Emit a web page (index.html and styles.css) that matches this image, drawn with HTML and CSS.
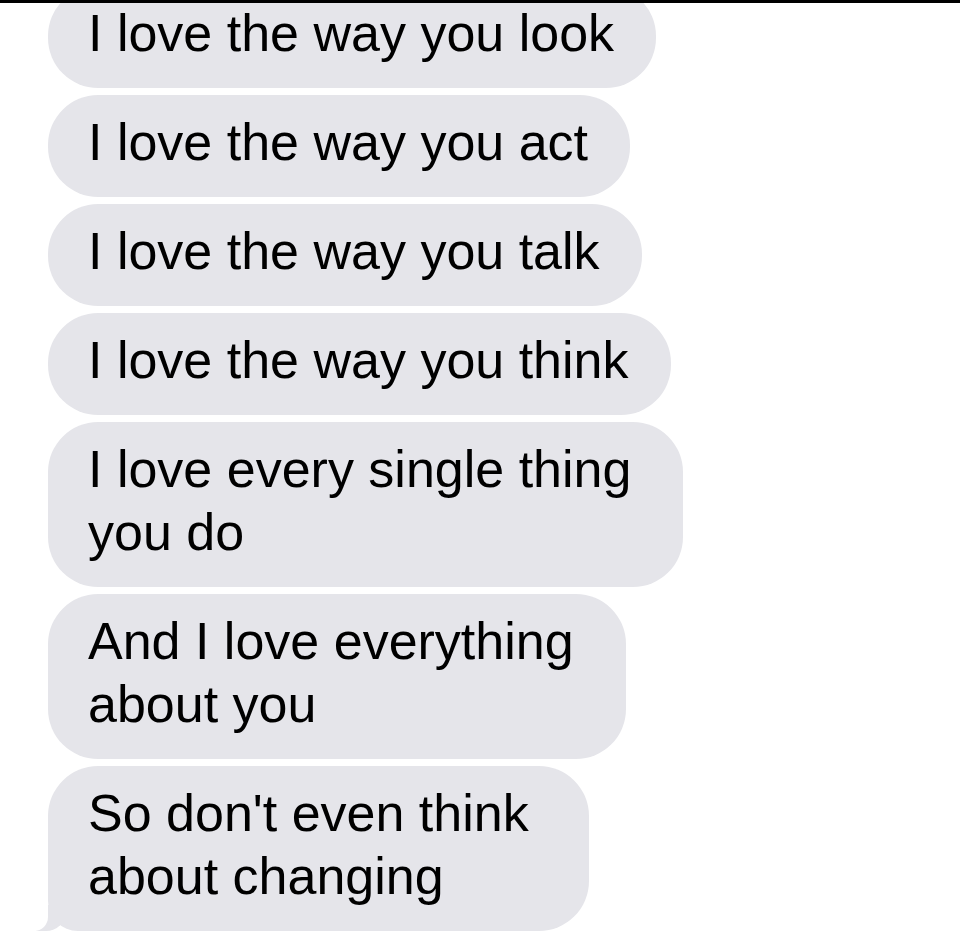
FILE: index.html
```html
<!DOCTYPE html>
<html lang="en">
  <head>
    <meta charset="UTF-8" />
    <meta name="viewport" content="width=device-width, initial-scale=1.0" />
    <title>Messages</title>
    <link rel="stylesheet" href="styles.css">
  </head>
  <body>
    <div id="screen">
      <div id="thread">
        <div class="bubble">I love the way you look</div>
        <div class="bubble">I love the way you act</div>
        <div class="bubble">I love the way you talk</div>
        <div class="bubble">I love the way you think</div>
        <div class="bubble multi">I love every single thing<br />you do</div>
        <div class="bubble multi">And I love everything<br />about you</div>
        <div class="bubble multi last">So don't even think<br />about changing</div>
      </div>
    </div>
  </body>
</html>
```

FILE: styles.css
```css
* {
  padding: 0;
  margin: 0;
  box-sizing: border-box;
}
body {
  height: 100vh;
  width: 100vw;
  overflow: hidden;
  background-color: #ffffff;
  font-family: "Liberation Sans", Arial, sans-serif;
  color: #000000;
}
#screen {
  height: 100vh;
  overflow: hidden;
  border-top: 3px solid #000000;
}
#thread {
  display: flex;
  flex-direction: column;
  align-items: flex-start;
  gap: 7px;
  padding-left: 48px;
  margin-top: -17px;
}
.bubble {
  position: relative;
  background-color: #e5e5ea;
  border-radius: 50px;
  padding: 16px 42px 23px 40px;
  font-size: 52px;
  line-height: 63px;
}
.multi {
  padding-right: 52px;
}
.last {
  padding-right: 60px;
  border-bottom-left-radius: 30px;
}
.last::before {
  content: "";
  position: absolute;
  bottom: 0;
  left: -12px;
  width: 30px;
  height: 26px;
  background-color: #e5e5ea;
  border-bottom-right-radius: 20px;
}
.last::after {
  content: "";
  position: absolute;
  bottom: 0;
  left: -16px;
  width: 16px;
  height: 28px;
  background-color: #ffffff;
  border-bottom-right-radius: 14px;
}
```
